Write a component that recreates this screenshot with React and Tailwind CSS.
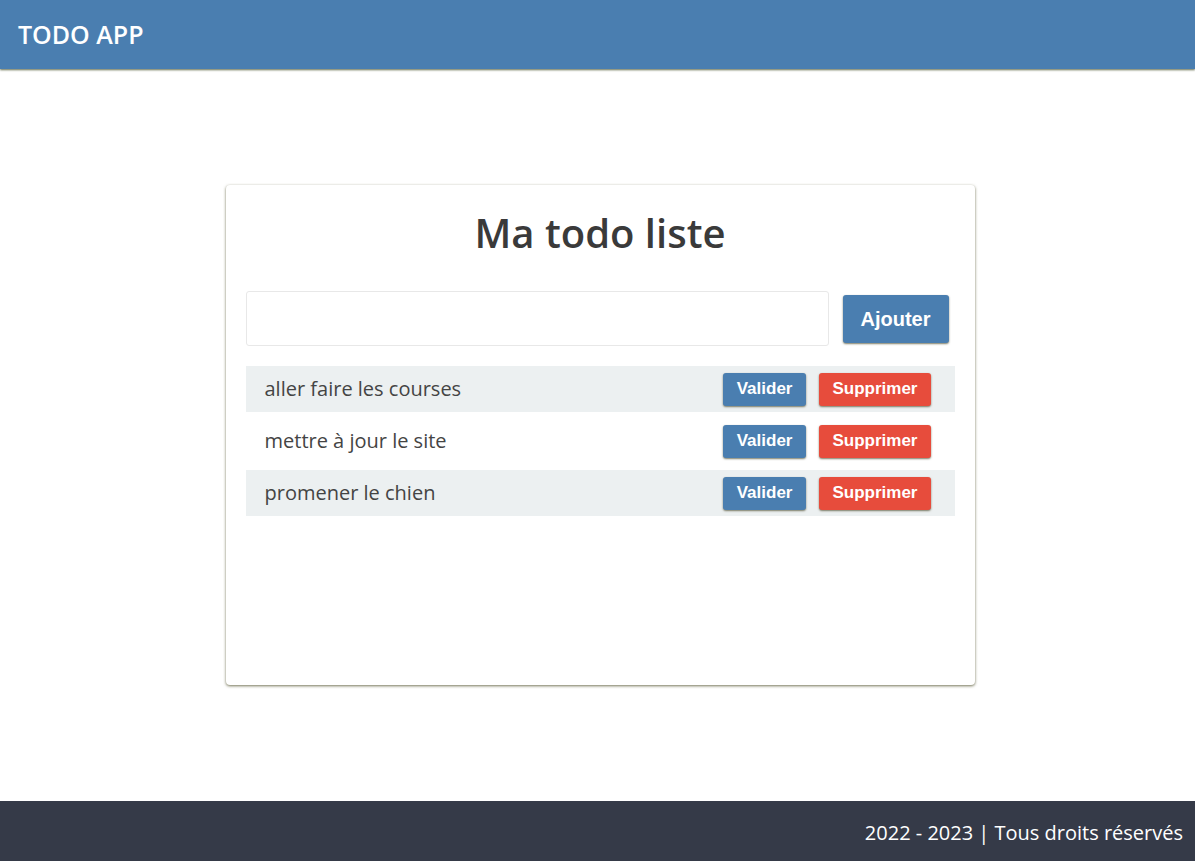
import React, { useState } from 'react';

const initialTodos = ['aller faire les courses', 'mettre à jour le site', 'promener le chien'];

function TodoRow({ label, index }) {
  return (
    <li
      className={`flex h-[46px] items-center justify-between pl-[19px] pr-[24px] ${
        index % 2 === 0 ? 'bg-[#ecf0f1]' : 'bg-white'
      } mb-[6px]`}
    >
      <span className="text-[20px] text-[#444]">{label}</span>
      <div className="flex gap-[13px] font-['Liberation_Sans',Arial,sans-serif] text-[17px] font-bold text-white">
        <button
          type="button"
          className="h-[33px] rounded-[3px] bg-[#4a7eb0] px-[14px] shadow-[0_1px_2px_rgba(70,70,40,0.7)]"
        >
          Valider
        </button>
        <button
          type="button"
          className="h-[33px] rounded-[3px] bg-[#e74c3c] px-[13px] shadow-[0_1px_2px_rgba(70,70,40,0.7)]"
        >
          Supprimer
        </button>
      </div>
    </li>
  );
}

export default function App() {
  const [value, setValue] = useState('');
  return (
    <div className="flex min-h-screen flex-col bg-white font-['Open_Sans','Noto_Sans',sans-serif]">
      <header className="relative z-10 flex h-[69px] items-center bg-[#4a7eb0] px-[18px] shadow-[0_1px_2px_rgba(60,70,30,0.8)]">
        <h1 className="text-[25px] font-semibold text-white">TODO APP</h1>
      </header>

      <main className="flex flex-1 items-center justify-center">
        <div className="ml-[5px] flex h-[500px] w-[749px] flex-col rounded-[4px] bg-white px-[20px] shadow-[0_1px_3px_rgba(70,70,30,0.75)]">
          <h2 className="mt-[18px] text-center text-[40px] font-semibold text-[#3a3a3a]">Ma todo liste</h2>

          <form className="mt-[28px] flex items-center" onSubmit={(e) => e.preventDefault()}>
            <input
              value={value}
              onChange={(e) => setValue(e.target.value)}
              className="h-[55px] flex-1 rounded-[3px] border border-[#e8e8e8] px-3 outline-none"
            />
            <button
              type="submit"
              className="ml-[14px] mr-[6px] h-[48px] rounded-[3px] bg-[#4a7eb0] px-[18px] font-['Liberation_Sans',Arial,sans-serif] text-[20px] font-bold text-white shadow-[0_1px_2px_rgba(70,70,40,0.7)]"
            >
              Ajouter
            </button>
          </form>

          <ul className="mt-[20px]">
            {initialTodos.map((t, i) => (
              <TodoRow key={t} label={t} index={i} />
            ))}
          </ul>
        </div>
      </main>

      <footer className="flex h-[60px] items-center justify-end bg-[#353a48] px-[12px] pt-[3px]">
        <p className="text-[20px] text-white">2022 - 2023 | Tous droits réservés</p>
      </footer>
    </div>
  );
}
